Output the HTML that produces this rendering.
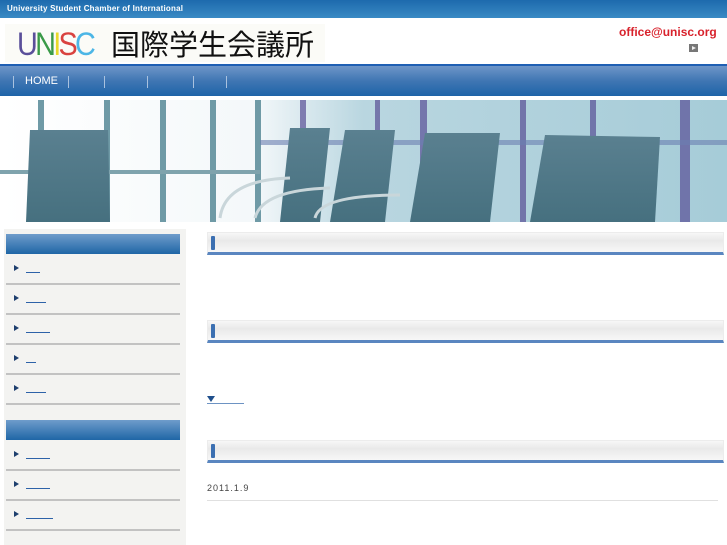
<!DOCTYPE html>
<html><head><meta charset="utf-8"><style>
*{margin:0;padding:0;box-sizing:border-box}
body{width:727px;height:545px;overflow:hidden;background:#fff;font-family:"Liberation Sans","Noto Sans CJK JP",sans-serif;position:relative}
.abs{position:absolute}
#top{left:0;top:0;width:727px;height:18px;background:linear-gradient(#1d6aad,#3a8ac4);color:#fff;font-size:8px;font-weight:bold;padding:4px 0 0 7px;letter-spacing:.2px}
#logo{left:5px;top:24px;width:320px;height:38px;background:#fbfbf7}
#bl{left:0;top:64px;width:727px;height:2px;background:#1f5fb3}
#nav{left:0;top:66px;width:727px;height:30px;background:linear-gradient(#6e95c8,#3f76b3 50%,#1e64a8);}
.sep{position:absolute;top:10px;width:1px;height:12px;background:#a9c2df}
.side{left:6px;width:175px}
.sh{position:absolute;left:0;width:174px;height:20px;background:linear-gradient(#6f9ccb,#1f66a6)}
.it{position:absolute;left:0;width:174px;border-bottom:2px solid #c2c2c2}
.it i{position:absolute;left:8px;top:-1px;width:0;height:0;border-left:5px solid #1e3f6e;border-top:3px solid transparent;border-bottom:3px solid transparent}
.it b{position:absolute;left:20px;top:5px;height:1px;background:#2d62a8}
.hd{position:absolute;left:207px;width:517px;height:23px;background:linear-gradient(#f7f7f7,#e9e9e9 40%,#f7f7f7);border:1px solid #ececec;border-bottom:3px solid #5a86c0}
.hd span{position:absolute;left:3px;top:3px;width:4px;height:14px;background:#3b6fb1;border-radius:1px}
</style></head><body>
<div id="top" class="abs">University Student Chamber of International</div>
<div id="logo" class="abs">
<div class="abs" style="left:12px;top:2px;font-size:32px;letter-spacing:-3px;transform:scaleX(.9);transform-origin:left;font-family:'Liberation Sans',sans-serif"><span style="color:#5a4f9a">U</span><span style="color:#3a9a48">N</span><span style="color:#e8d92a">I</span><span style="color:#d9423f">S</span><span style="color:#4cb6e6">C</span></div>
<div class="abs" style="left:106px;top:1px;font-size:29px;color:#111;font-family:'Noto Sans CJK JP',sans-serif;line-height:36px">国際学生会議所</div>
</div>
<div class="abs" style="left:619px;top:25px;color:#d8222c;font-weight:bold;font-size:12px">office@unisc.org</div>
<div class="abs" style="left:689px;top:44px;width:9px;height:8px;background:#777"><div style="position:absolute;left:3px;top:2px;border-left:4px solid #eee;border-top:2px solid transparent;border-bottom:2px solid transparent"></div></div>
<div id="bl" class="abs"></div>
<div id="nav" class="abs">
<div class="sep" style="left:13px"></div>
<div class="abs" style="left:25px;top:9px;color:#fff;font-size:11px">HOME</div>
<div class="sep" style="left:68px"></div><div class="sep" style="left:104px"></div><div class="sep" style="left:147px"></div><div class="sep" style="left:193px"></div><div class="sep" style="left:226px"></div>
</div>
<svg class="abs" style="left:0;top:100px" width="727" height="122" viewBox="0 0 727 122">
<defs><linearGradient id="g" x1="0" x2="1"><stop offset="0" stop-color="#fff"/><stop offset=".35" stop-color="#f4f8fa"/><stop offset=".5" stop-color="#b9d6e0"/><stop offset="1" stop-color="#a6ccd8"/></linearGradient>
<linearGradient id="c" x1="0" y1="0" x2="0" y2="1"><stop offset="0" stop-color="#5a8090"/><stop offset="1" stop-color="#46707f"/></linearGradient></defs>
<rect width="727" height="122" fill="url(#g)"/>
<g fill="#6f9aa6"><rect x="38" y="0" width="6" height="122"/><rect x="104" y="0" width="6" height="122"/><rect x="160" y="0" width="6" height="122"/><rect x="210" y="0" width="6" height="122"/><rect x="255" y="0" width="6" height="122"/></g>
<g fill="#584f96" opacity=".7"><rect x="300" y="0" width="6" height="122"/><rect x="375" y="0" width="5" height="122"/><rect x="420" y="0" width="7" height="122"/><rect x="520" y="0" width="6" height="122"/><rect x="590" y="0" width="6" height="122"/><rect x="680" y="0" width="10" height="122"/></g>
<rect x="0" y="70" width="260" height="4" fill="#7fa3ad"/><rect x="260" y="40" width="467" height="5" fill="#6a7fb0" opacity=".6"/>
<g fill="url(#c)">
<polygon points="30,30 108,30 110,122 26,122"/>
<polygon points="290,28 330,28 320,122 280,122"/>
<polygon points="345,30 395,30 385,122 330,122"/>
<polygon points="425,33 500,33 490,122 410,122"/>
<polygon points="545,35 660,37 655,122 530,122"/>
</g>
<g stroke="#c9d6da" stroke-width="3" fill="none"><path d="M220,118 Q225,80 290,78"/><path d="M255,118 Q262,90 330,88"/><path d="M315,118 Q320,95 400,95"/></g>
</svg>
<div class="abs" style="left:4px;top:229px;width:182px;height:316px;background:#f3f3f1"></div>
<div class="abs side" style="top:232px;height:173px">
<div class="sh" style="top:2px"></div>
<div class="it" style="top:22px;height:31px"><i style="top:11px"></i><b style="top:18px;width:14px"></b></div>
<div class="it" style="top:53px;height:30px"><i style="top:10px"></i><b style="top:17px;width:20px"></b></div>
<div class="it" style="top:83px;height:30px"><i style="top:10px"></i><b style="top:17px;width:24px"></b></div>
<div class="it" style="top:113px;height:30px"><i style="top:10px"></i><b style="top:17px;width:10px"></b></div>
<div class="it" style="top:143px;height:30px"><i style="top:10px"></i><b style="top:17px;width:20px"></b></div>
</div>
<div class="abs side" style="top:418px;height:127px">
<div class="sh" style="top:2px"></div>
<div class="it" style="top:22px;height:31px"><i style="top:11px"></i><b style="top:18px;width:24px"></b></div>
<div class="it" style="top:53px;height:30px"><i style="top:10px"></i><b style="top:17px;width:24px"></b></div>
<div class="it" style="top:83px;height:30px"><i style="top:10px"></i><b style="top:17px;width:27px"></b></div>
</div>
<div class="hd" style="top:232px"><span></span></div>
<div class="hd" style="top:320px"><span></span></div>
<div class="abs" style="left:207px;top:396px;border-top:6px solid #1f4f8c;border-left:4px solid transparent;border-right:4px solid transparent;width:0"></div>
<div class="abs" style="left:207px;top:403px;width:37px;height:1px;background:#6d93c3"></div>
<div class="hd" style="top:440px"><span></span></div>
<div class="abs" style="left:207px;top:483px;font-size:9px;color:#444;letter-spacing:1px">2011.1.9</div>
<div class="abs" style="left:207px;top:500px;width:511px;height:1px;background:#e0e0e0"></div>
</body></html>
